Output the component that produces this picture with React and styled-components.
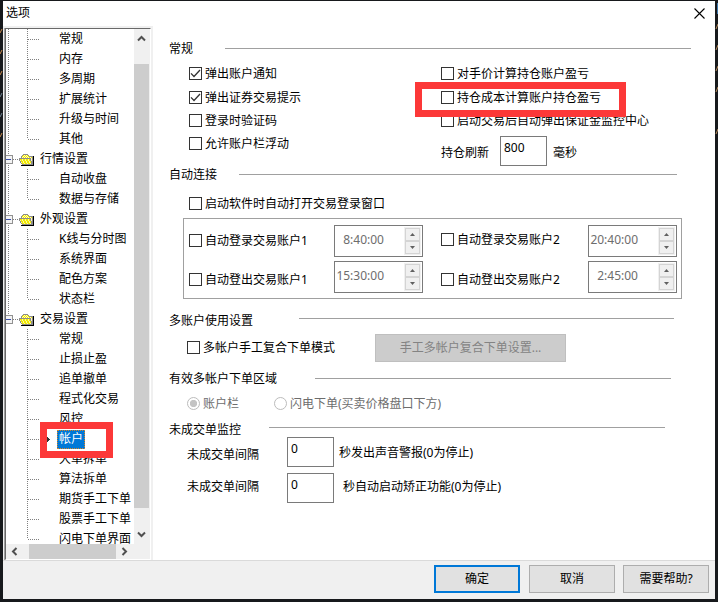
import styled, { createGlobalStyle, css } from "styled-components";

const tree = [
  { label: "常规" },
  { label: "内存" },
  { label: "多周期" },
  { label: "扩展统计" },
  { label: "升级与时间" },
  { label: "其他", last: true },
  { label: "行情设置", folder: true },
  { label: "自动收盘" },
  { label: "数据与存储", last: true },
  { label: "外观设置", folder: true },
  { label: "K线与分时图" },
  { label: "系统界面" },
  { label: "配色方案" },
  { label: "状态栏", last: true },
  { label: "交易设置", folder: true, end: true },
  { label: "常规" },
  { label: "止损止盈" },
  { label: "追单撤单" },
  { label: "程式化交易" },
  { label: "风控" },
  { label: "帐户", selected: true },
  { label: "大单拆单" },
  { label: "算法拆单" },
  { label: "期货手工下单" },
  { label: "股票手工下单" },
  { label: "闪电下单界面", last: true },
];

const rootEnd = tree.findIndex((item) => item.end);

function Guides({ item, index }) {
  const dots = { stroke: "#808080", strokeDasharray: "1 1", fill: "none" };
  const rootLine = index < rootEnd ? 20 : index === rootEnd ? 10 : 0;

  if (item.folder) {
    return (
      <svg width="32" height="20" shapeRendering="crispEdges">
        <path d={`M2.5 0V${rootLine}M7 10.5H13`} {...dots} />
        <rect x="-1.5" y="6.5" width="8" height="8" fill="#f4f4f4" stroke="#919191" />
        <path d="M0 10.5H5" stroke="#3b4fa8" />
        <path d="M15 9V7H16V6H17V5H22V6H23V7H27V16H16V15H15Z" fill="#8c8c8c" />
        <path d="M16 9V7H17V6H22V7H23V8H26V15H25V9Z" fill="#fffbc0" />
        <path d="M17 6.5H22M16 7.5H23M17 8.5H26" stroke="#f2ea00" strokeDasharray="1 1" />
        <path d="M13 9H24V10H25V12H26V15H16V14H15V12H14V10H13Z" fill="#fdf9a0" />
        <path d="M14 10.5H24M15 12.5H25M16 14.5H26" stroke="#f0e800" strokeDasharray="2 1" />
        <path d="M15 11.5H25M16 13.5H26" stroke="#f0e800" strokeDasharray="2 1" strokeDashoffset="1" />
        <path d="M13 9.5H24M24.5 10V12M25.5 12V15M13.5 10V12M14.5 12V14" stroke="#8c8c8c" />
        <path d="M27.5 7V16M15 16.5H28" stroke="#000" />
      </svg>
    );
  }

  return (
    <svg width="51" height="20" shapeRendering="crispEdges">
      {rootLine > 0 && <path d="M2.5 0V20" {...dots} />}
      <path d={`M21.5 0V${item.last ? 10 : 20}M22 10.5H33`} {...dots} />
      {item.selected && <path d="M41 8H42V9H43V10H44V11H43V12H42V13H41Z" fill="#333" />}
    </svg>
  );
}

function Check({ label, checked, top }) {
  return (
    <CheckLabel $top={top}>
      <CheckBox>
        {checked && (
          <svg width="11" height="11">
            <path d="M1 5.4L4 8.5L10 2" fill="none" stroke="#333" strokeWidth="1.3" />
          </svg>
        )}
      </CheckBox>
      {label}
    </CheckLabel>
  );
}

function TimeField({ value }) {
  return (
    <TimeBox>
      <span>{value}</span>
      <Spinner>
        <SpinButton><svg width="5" height="3"><path d="M0 3L2.5 0L5 3Z" fill="#606060" /></svg></SpinButton>
        <SpinButton><svg width="5" height="3"><path d="M0 0L2.5 3L5 0Z" fill="#606060" /></svg></SpinButton>
      </Spinner>
    </TimeBox>
  );
}

function Header({ title, gap, width, top, rule = 8 }) {
  return (
    <SectionHeader $top={top} $gap={gap}>
      <h2>{title}</h2>
      <Rule $width={width} $top={rule} />
    </SectionHeader>
  );
}

function Chevron({ d }) {
  return (
    <svg width="9" height="9">
      <path d={d} fill="none" stroke="#505050" strokeWidth="2" />
    </svg>
  );
}

export default function App() {
  return (
    <>
      <GlobalStyle />
      <Desktop>
        <Specks width="718" height="602">
          <path d="M0 33L2 29M0 54L2 50M0 75L2 71M0 137L2 133" stroke="#c98a4b" />
          <path d="M0 97L2 93M0 117L2 113" stroke="#6f8291" />
          <path d="M716 29L718 24M716 50L718 45M716 71L718 66M716 92L718 87M716 134L718 129" stroke="#b78a5a" />
          <path d="M717.5 3V14" stroke="#3f79ad" />
        </Specks>
        <Dialog>
          <TitleBar>
            <h1>选项</h1>
            <svg width="11" height="11">
              <path d="M0.5 0.5L10.5 10.5M10.5 0.5L0.5 10.5" stroke="#000" strokeWidth="1.1" />
            </svg>
          </TitleBar>
          <Main>
            <Sidebar>
              <TreeFrame>
                <TreeList>
                  {tree.map((item, index) => (
                    <TreeRow key={index}>
                      <Guides item={item} index={index} />
                      <TreeText $selected={item.selected}>{item.label}</TreeText>
                    </TreeRow>
                  ))}
                </TreeList>
                <VerticalBar>
                  <Chevron d="M1 6.5L4.5 3L8 6.5" />
                  <VerticalThumb />
                  <Chevron d="M1 2.5L4.5 6L8 2.5" />
                </VerticalBar>
                <HorizontalBar>
                  <Chevron d="M6.5 1L3 4.5L6.5 8" />
                  <HorizontalThumb />
                  <Chevron d="M2.5 1L6 4.5L2.5 8" />
                </HorizontalBar>
              </TreeFrame>
            </Sidebar>
            <Panel>
              <Header title="常规" gap={56} width={466} top={13} />
              <General>
                <CheckColumn>
                  <Check label="弹出账户通知" checked />
                  <Check label="弹出证券交易提示" checked />
                  <Check label="登录时验证码" />
                  <Check label="允许账户栏浮动" />
                </CheckColumn>
                <CheckColumn>
                  <Check label="对手价计算持仓账户盈亏" />
                  <Check label="持仓成本计算账户持仓盈亏" />
                  <Check label="启动交易后自动弹出保证金监控中心" />
                  <Refresh>
                    <FieldText $width={59} $top={9}>持仓刷新</FieldText>
                    <NumberBox>800</NumberBox>
                    <FieldText $left={6} $top={9}>毫秒</FieldText>
                  </Refresh>
                </CheckColumn>
              </General>

              <Header title="自动连接" gap={70} width={438} />
              <AutoOpen>
                <Check label="启动软件时自动打开交易登录窗口" />
              </AutoOpen>
              <AccountGroup>
                <Check label="自动登录交易账户1" top={9} />
                <TimeField value="8:40:00" />
                <Check label="自动登录交易账户2" top={8} />
                <TimeField value="20:40:00" />
                <Check label="自动登出交易账户1" top={12} />
                <TimeField value="15:30:00" />
                <Check label="自动登出交易账户2" top={12} />
                <TimeField value="2:45:00" />
              </AccountGroup>

              <Header title="多账户使用设置" gap={130} width={375} top={13} rule={6} />
              <MultiAccount>
                <Check label="多帐户手工复合下单模式" top={7} />
                <WideButton disabled>手工多帐户复合下单设置...</WideButton>
              </MultiAccount>

              <Header title="有效多帐户下单区域" gap={146} width={356} top={8} />
              <RadioRow>
                <RadioLabel><Radio $on />账户栏</RadioLabel>
                <RadioLabel><Radio />闪电下单(买卖价格盘口下方)</RadioLabel>
              </RadioRow>

              <Header title="未成交单监控" gap={100} width={396} top={11} rule={6} />
              <MonitorRow>
                <FieldText $width={100} $top={10}>未成交单间隔</FieldText>
                <NumberBox>0</NumberBox>
                <FieldText $left={5} $top={8}>秒发出声音警报(0为停止)</FieldText>
              </MonitorRow>
              <MonitorRow>
                <FieldText $width={100} $top={6}>未成交单间隔</FieldText>
                <NumberBox>0</NumberBox>
                <FieldText $left={9} $top={6}>秒自动启动矫正功能(0为停止)</FieldText>
              </MonitorRow>
            </Panel>
          </Main>
          <Footer>
            <Button $primary>确定</Button>
            <Button>取消</Button>
            <Button>需要帮助?</Button>
          </Footer>
        </Dialog>
        <Marker $x={40} $y={422} $w={73} $h={36} />
        <Marker $x={415} $y={82} $w={211} $h={35} />
      </Desktop>
    </>
  );
}

const GlobalStyle = createGlobalStyle`
  * {
    box-sizing: border-box;
  }
  body {
    margin: 0;
    font-family: "Noto Sans", "Noto Sans CJK SC", sans-serif;
    font-size: 12px;
    line-height: 16px;
    color: #000;
    background: #17191c;
  }
  h1, h2 {
    margin: 0;
    font-size: 12px;
    font-weight: normal;
  }
  h2 {
    padding-top: 1px;
  }
  svg {
    display: block;
    flex: none;
  }
  button {
    padding: 0;
    font: inherit;
  }
`;

const Desktop = styled.div`
  position: relative;
  width: 718px;
  height: 602px;
  padding: 1px 3px 3px;
  overflow: hidden;
  background: #17191c;
`;

const Specks = styled.svg`
  position: absolute;
  left: 0;
  top: 0;
`;

const Dialog = styled.div`
  position: relative;
  display: flex;
  flex-direction: column;
  width: 712px;
  height: 598px;
  background: #fff;
`;

const TitleBar = styled.div`
  display: flex;
  justify-content: space-between;
  height: 25px;
  padding: 4px 10px 0 3px;
  svg {
    margin-top: 3px;
  }
`;

const Main = styled.div`
  display: flex;
  height: 534px;
`;

const Sidebar = styled.div`
  width: 150px;
  padding: 2px 2px 0 2px;
  background: #f0f0f0;
`;

const TreeFrame = styled.div`
  display: grid;
  grid-template-columns: 128px 15px;
  grid-template-rows: 515px 15px;
  width: 146px;
  height: 532px;
  border: 1px solid #fff;
  border-top-color: #696969;
  border-left-color: #696969;
  box-shadow: -1px 0 #a0a0a0;
  background: #f0f0f0;
`;

const TreeList = styled.div`
  overflow: hidden;
  background: #fff;
`;

const TreeRow = styled.div`
  display: flex;
  align-items: center;
  height: 20px;
  white-space: nowrap;
`;

const TreeText = styled.span`
  height: 19px;
  padding: 0 2px;
  line-height: 17px;
  ${(props) => props.$selected && css`
    color: #fff;
    background: #0078d7;
    outline: 1px dotted #d98324;
    outline-offset: -1px;
  `}
`;

const VerticalBar = styled.div`
  display: flex;
  flex-direction: column;
  align-items: center;
  justify-content: space-between;
  padding: 5px 0;
  background: #f0f0f0;
`;

const VerticalThumb = styled.div`
  width: 15px;
  height: 444px;
  margin-bottom: 8px;
  margin-top: 7px;
  background: #cdcdcd;
`;

const HorizontalBar = styled.div`
  display: flex;
  align-items: center;
  padding-left: 4px;
  background: #f0f0f0;
`;

const HorizontalThumb = styled.div`
  width: 87px;
  height: 15px;
  margin: 0 4px 0 10px;
  background: #cdcdcd;
`;

const Panel = styled.div`
  flex: 1;
  padding: 1px 0 0 16px;
  background: #fff;
`;

const SectionHeader = styled.div`
  display: grid;
  grid-template-columns: ${(props) => props.$gap}px auto;
  height: 16px;
  margin-top: ${(props) => props.$top || 0}px;
  white-space: nowrap;
`;

const Rule = styled.div`
  width: ${(props) => props.$width}px;
  height: 1px;
  margin-top: ${(props) => props.$top}px;
  background: #a0a0a0;
`;

const General = styled.div`
  display: grid;
  grid-template-columns: 252px auto;
  height: 110px;
  padding: 11px 0 0 20px;
`;

const CheckColumn = styled.div`
  display: flex;
  flex-direction: column;
  gap: 10px;
  > :first-child {
    margin-bottom: 1px;
  }
`;

const CheckLabel = styled.label`
  display: flex;
  align-items: center;
  gap: 3px;
  height: 13px;
  margin-top: ${(props) => props.$top || 0}px;
  white-space: nowrap;
`;

const CheckBox = styled.span`
  flex: none;
  width: 13px;
  height: 13px;
  border: 1px solid #333;
  background: #fff;
`;

const Refresh = styled.div`
  display: flex;
  margin-top: -1px;
`;

const FieldText = styled.span`
  width: ${(props) => (props.$width ? props.$width + "px" : "auto")};
  padding-top: ${(props) => props.$top}px;
  margin-left: ${(props) => props.$left || 0}px;
  white-space: nowrap;
`;

const NumberBox = styled.div`
  width: 47px;
  height: 30px;
  padding: 3px 3px 0;
  border: 1px solid #7a7a7a;
`;

const AutoOpen = styled.div`
  padding: 15px 0 8px 20px;
`;

const AccountGroup = styled.div`
  display: grid;
  grid-template-columns: 145px 107px 147px 89px;
  grid-template-rows: 32px 32px;
  row-gap: 4px;
  width: 499px;
  height: 81px;
  margin-left: 14px;
  padding: 6px 0 0 5px;
  border: 1px solid #a0a0a0;
`;

const TimeBox = styled.div`
  display: flex;
  justify-content: flex-end;
  width: 89px;
  height: 32px;
  padding: 1px;
  border: 1px solid #7a7a7a;
  color: #6d6d6d;
  span {
    padding: 5px 20px 0 0;
  }
`;

const Spinner = styled.div`
  display: flex;
  flex-direction: column;
  width: 17px;
  height: 28px;
  padding: 1px;
  background: #f0f0f0;
`;

const SpinButton = styled.div`
  display: flex;
  flex: 1;
  align-items: center;
  justify-content: center;
  border: 1px solid #d4d4d4;
`;

const MultiAccount = styled.div`
  display: grid;
  grid-template-columns: 188px 191px;
  padding: 6px 0 0 18px;
`;

const WideButton = styled.button`
  height: 28px;
  border: 1px solid #bfbfbf;
  background: #ccc;
  color: #838383;
`;

const RadioRow = styled.div`
  display: grid;
  grid-template-columns: 87px auto;
  padding: 11px 0 0 18px;
`;

const RadioLabel = styled.label`
  display: flex;
  align-items: center;
  gap: 3px;
  height: 13px;
  color: #6d6d6d;
`;

const Radio = styled.span`
  width: 13px;
  height: 13px;
  border: 1px solid #bcbcbc;
  border-radius: 50%;
  background: ${(props) => (props.$on ? "radial-gradient(circle, #c4c4c4 3.3px, #fff 4px)" : "#fff")};
`;

const MonitorRow = styled.div`
  display: flex;
  height: 30px;
  margin-bottom: 6px;
  padding-left: 18px;
`;

const Footer = styled.div`
  display: flex;
  flex: 1;
  justify-content: flex-end;
  padding: 4px 6px 0 0;
  border-top: 1px solid #dadada;
  background: #f0f0f0;
`;

const Button = styled.button`
  width: 86px;
  height: 28px;
  margin-left: 8px;
  border: ${(props) => (props.$primary ? "2px solid #0078d7" : "1px solid #adadad")};
  background: #e1e1e1;
  color: #000;
  &:nth-child(2) {
    margin-left: 9px;
  }
`;

const Marker = styled.div`
  position: absolute;
  left: ${(props) => props.$x}px;
  top: ${(props) => props.$y}px;
  width: ${(props) => props.$w}px;
  height: ${(props) => props.$h}px;
  border: 7px solid #fc3838;
`;
